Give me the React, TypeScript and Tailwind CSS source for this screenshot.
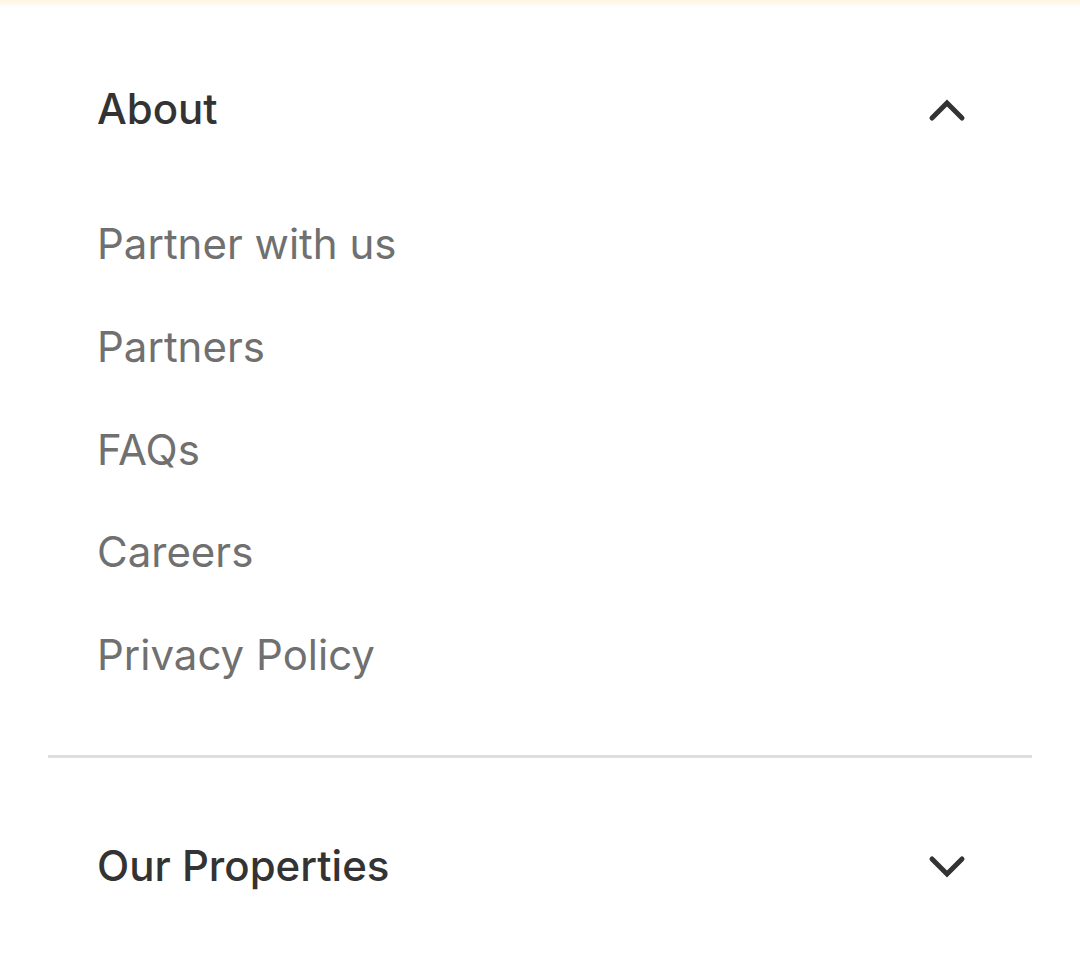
import React from "react";

function Chevron({ up }: { up?: boolean }) {
  return (
    <svg width="40" height="40" viewBox="0 0 40 40" fill="none">
      <path
        d={up ? "M5 29 L20 14 L35 29" : "M5 13 L20 28 L35 13"}
        stroke="#333333"
        strokeWidth="5"
        strokeLinecap="round"
        strokeLinejoin="miter"
      />
    </svg>
  );
}

export default function App() {
  const items = ["Partner with us", "Partners", "FAQs", "Careers", "Privacy Policy"];
  return (
    <div className="w-[1080px] h-[965px] bg-white relative overflow-hidden" style={{ fontFamily: "Inter, 'Noto Sans', sans-serif" }}>
      <div className="h-[14px] bg-gradient-to-b from-[#fff3df] via-[#fdfffe] to-white" />
      <div className="px-[48px]">
        <div className="px-[49px] pt-[67px]">
          <div className="flex items-center justify-between pr-[16px] h-[56px]">
            <span className="text-[42px] font-medium text-[#333333] leading-none">About</span>
            <Chevron up />
          </div>
          <div className="flex flex-col mt-[79px] gap-[46.75px]">
            {items.map((t) => (
              <span key={t} className="text-[42px] text-[#707070] leading-[56px] h-[56px]">
                {t}
              </span>
            ))}
          </div>
        </div>
        <div className="h-[3px] bg-[#dedede] mt-[72px]" />
        <div className="px-[49px] pt-[80px]">
          <div className="flex items-center justify-between pr-[16px] h-[56px]">
            <span className="text-[42px] font-medium text-[#333333] leading-none">Our Properties</span>
            <Chevron />
          </div>
        </div>
      </div>
    </div>
  );
}
